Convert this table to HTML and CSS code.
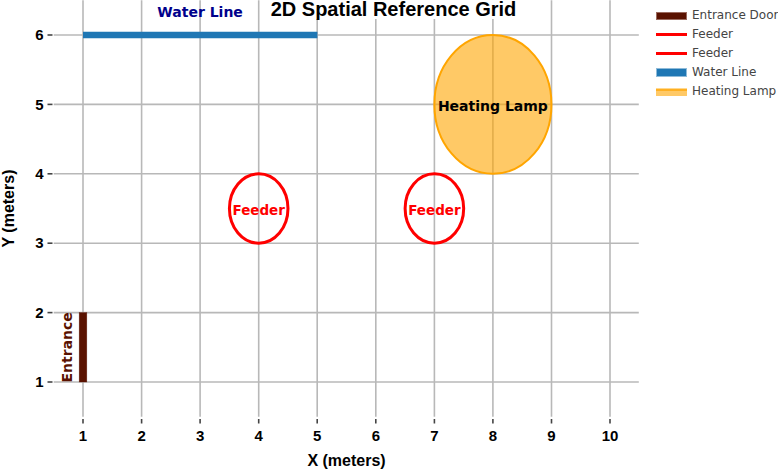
FILE: index.html
```html
<!DOCTYPE html>
<html lang="en">
<head>
<meta charset="utf-8">
<title>2D Spatial Reference Grid</title>
<link rel="stylesheet" href="styles.css">
</head>
<body>
<div class="figure">
  <svg class="plot" width="650" height="470" viewBox="0 0 650 470" xmlns="http://www.w3.org/2000/svg">
    <g class="grid">
      <line x1="83" y1="0.3" x2="83" y2="416.7"/>
      <line x1="141.6" y1="0.3" x2="141.6" y2="416.7"/>
      <line x1="200.1" y1="0.3" x2="200.1" y2="416.7"/>
      <line x1="258.7" y1="0.3" x2="258.7" y2="416.7"/>
      <line x1="317.2" y1="0.3" x2="317.2" y2="416.7"/>
      <line x1="375.8" y1="0.3" x2="375.8" y2="416.7"/>
      <line x1="434.4" y1="0.3" x2="434.4" y2="416.7"/>
      <line x1="492.9" y1="0.3" x2="492.9" y2="416.7"/>
      <line x1="551.5" y1="0.3" x2="551.5" y2="416.7"/>
      <line x1="610" y1="0.3" x2="610" y2="416.7"/>
      <line x1="53.7" y1="382" x2="638.8" y2="382"/>
      <line x1="53.7" y1="312.6" x2="638.8" y2="312.6"/>
      <line x1="53.7" y1="243.2" x2="638.8" y2="243.2"/>
      <line x1="53.7" y1="173.8" x2="638.8" y2="173.8"/>
      <line x1="53.7" y1="104.4" x2="638.8" y2="104.4"/>
      <line x1="53.7" y1="35" x2="638.8" y2="35"/>
    </g>

    <g class="ticks">
      <line x1="47.5" y1="382" x2="52.5" y2="382"/>
      <line x1="47.5" y1="312.6" x2="52.5" y2="312.6"/>
      <line x1="47.5" y1="243.2" x2="52.5" y2="243.2"/>
      <line x1="47.5" y1="173.8" x2="52.5" y2="173.8"/>
      <line x1="47.5" y1="104.4" x2="52.5" y2="104.4"/>
      <line x1="47.5" y1="35" x2="52.5" y2="35"/>
      <line x1="83" y1="419" x2="83" y2="423.5"/>
      <line x1="141.6" y1="419" x2="141.6" y2="423.5"/>
      <line x1="200.1" y1="419" x2="200.1" y2="423.5"/>
      <line x1="258.7" y1="419" x2="258.7" y2="423.5"/>
      <line x1="317.2" y1="419" x2="317.2" y2="423.5"/>
      <line x1="375.8" y1="419" x2="375.8" y2="423.5"/>
      <line x1="434.4" y1="419" x2="434.4" y2="423.5"/>
      <line x1="492.9" y1="419" x2="492.9" y2="423.5"/>
      <line x1="551.5" y1="419" x2="551.5" y2="423.5"/>
      <line x1="610" y1="419" x2="610" y2="423.5"/>
    </g>

    <g class="ytick-labels">
      <text x="43.5" y="387.2">1</text>
      <text x="43.5" y="317.8">2</text>
      <text x="43.5" y="248.4">3</text>
      <text x="43.5" y="179">4</text>
      <text x="43.5" y="109.6">5</text>
      <text x="43.5" y="40.2">6</text>
    </g>
    <g class="xtick-labels">
      <text x="83" y="441">1</text>
      <text x="141.6" y="441">2</text>
      <text x="200.1" y="441">3</text>
      <text x="258.7" y="441">4</text>
      <text x="317.2" y="441">5</text>
      <text x="375.8" y="441">6</text>
      <text x="434.4" y="441">7</text>
      <text x="492.9" y="441">8</text>
      <text x="551.5" y="441">9</text>
      <text x="610" y="441">10</text>
    </g>

    <text class="axis-title" x="346.5" y="466">X (meters)</text>
    <text class="axis-title" x="0" y="0" transform="translate(13.5 208.5) rotate(-90)">Y (meters)</text>

    <!-- shapes -->
    <ellipse class="lamp" cx="492.9" cy="104.4" rx="58.56" ry="69.4"/>
    <ellipse class="feeder" cx="258.7" cy="208.5" rx="29.28" ry="34.7"/>
    <ellipse class="feeder" cx="434.4" cy="208.5" rx="29.28" ry="34.7"/>
    <line class="water" x1="83" y1="35" x2="317.4" y2="35"/>
    <rect class="door" x="79.2" y="312.6" width="7.6" height="69.4"/>

    <!-- annotations -->
    <text class="annot annot-water" x="200.1" y="17.3">Water Line</text>
    <text class="annot annot-feeder" x="258.7" y="214.6">Feeder</text>
    <text class="annot annot-feeder" x="434.4" y="214.6">Feeder</text>
    <text class="annot annot-lamp" x="492.9" y="111">Heating Lamp</text>
    <text class="annot annot-door" x="0" y="0" transform="translate(71.5 347.3) rotate(-90)">Entrance</text>

    <rect class="title-bg" x="269" y="0" width="250" height="19"/>
    <text class="title" x="393.5" y="16">2D Spatial Reference Grid</text>
  </svg>

  <ul class="legend">
    <li class="legend-item"><span class="swatch swatch-door"></span><span class="legend-text">Entrance Door</span></li>
    <li class="legend-item"><span class="swatch swatch-feeder"></span><span class="legend-text">Feeder</span></li>
    <li class="legend-item"><span class="swatch swatch-feeder"></span><span class="legend-text">Feeder</span></li>
    <li class="legend-item"><span class="swatch swatch-water"></span><span class="legend-text">Water Line</span></li>
    <li class="legend-item"><span class="swatch swatch-lamp"></span><span class="legend-text">Heating Lamp</span></li>
  </ul>
</div>
</body>
</html>
```

FILE: styles.css
```css
html, body {
  margin: 0;
  padding: 0;
  background: #ffffff;
}

body {
  width: 778px;
  height: 470px;
  overflow: hidden;
  font-family: "DejaVu Sans", Verdana, sans-serif;
}

.figure {
  display: flex;
  align-items: flex-start;
  width: 778px;
  height: 470px;
}

.plot {
  flex: none;
  display: block;
}

.grid line {
  stroke: #b8b8b8;
  stroke-width: 1.6;
}

.ticks line {
  stroke: #444444;
  stroke-width: 1.6;
}

.ytick-labels text,
.xtick-labels text {
  font-family: "Liberation Sans", Arial, sans-serif;
  font-weight: bold;
  font-size: 15px;
  fill: #000000;
}

.ytick-labels text {
  text-anchor: end;
}

.xtick-labels text {
  text-anchor: middle;
}

.axis-title {
  font-family: "Liberation Sans", Arial, sans-serif;
  font-weight: bold;
  font-size: 16px;
  fill: #000000;
  text-anchor: middle;
}

.title-bg {
  fill: #ffffff;
}

.title {
  font-family: "Liberation Sans", Arial, sans-serif;
  font-weight: bold;
  font-size: 20px;
  fill: #000000;
  text-anchor: middle;
}

.lamp {
  fill: rgba(255, 165, 0, 0.6);
  stroke: #ffa500;
  stroke-width: 2;
}

.feeder {
  fill: none;
  stroke: #ff0000;
  stroke-width: 3;
}

.water {
  stroke: #1f77b4;
  stroke-width: 6.5;
}

.door {
  fill: #5a1200;
  stroke: rgba(90, 18, 0, 0.6);
  stroke-width: 0.6;
}

.annot {
  font-family: "DejaVu Sans", Verdana, sans-serif;
  font-weight: bold;
  font-size: 14px;
  text-anchor: middle;
}

.annot-water {
  fill: #00008b;
}

.annot-feeder {
  fill: #ff0000;
  font-size: 13.5px;
}

.annot-lamp {
  fill: #000000;
}

.annot-door {
  fill: #5a1200;
}

.legend {
  list-style: none;
  margin: 0 0 0 6px;
  padding: 6px 0 0 0;
  display: flex;
  flex-direction: column;
}

.legend-item {
  display: flex;
  align-items: center;
  gap: 5px;
  height: 19px;
}

.swatch {
  flex: none;
  display: block;
  width: 31px;
  box-sizing: border-box;
}

.swatch-door {
  height: 8px;
  background: #5a1200;
  border: 1px solid #9a6a5e;
}

.swatch-feeder {
  height: 3px;
  background: #ff0000;
}

.swatch-water {
  height: 9px;
  background: #1f77b4;
  border: 1px solid #8fbbd9;
}

.swatch-lamp {
  height: 8px;
  background: linear-gradient(to bottom, #ffd88f 0, #ffd88f 1px, #ffb022 1px, #ffb022 3px, #ffc966 3px, #ffc966 100%);
}

.legend-text {
  font-family: "DejaVu Sans", Verdana, sans-serif;
  font-size: 12px;
  color: #444444;
  white-space: nowrap;
  line-height: 19px;
}
```
